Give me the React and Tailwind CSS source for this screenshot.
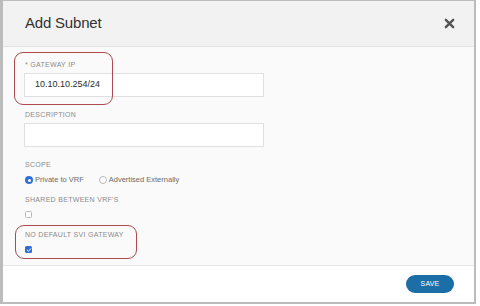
import React from 'react';

const Label = ({ children, className = '' }) => (
    <div className={`text-[7px] leading-[10px] tracking-[0.3px] uppercase text-[#8a8a8a] ${className}`}>{children}</div>
);

const Checkbox = ({ checked }) => (
    checked ? (
        <div className="w-[7px] h-[7px] rounded-[1.5px] bg-[#2f6fd6] flex items-center justify-center">
            <svg width="6" height="6" viewBox="0 0 10 10"><path d="M2 5.2 L4.2 7.3 L8 2.8" fill="none" stroke="#fff" strokeWidth="1.6" strokeLinecap="round" strokeLinejoin="round" /></svg>
        </div>
    ) : (
        <div className="w-[7px] h-[7px] rounded-[1.5px] border border-[#b9b9b9] bg-white" />
    )
);

const App = () => {
    return (
        <div className="w-[480px] h-[306px] bg-white" style={{ fontFamily: '"Liberation Sans", Arial, sans-serif' }}>
            <div className="w-[476px] h-[304px] flex flex-col border-l-[3px] border-t border-r-2 border-b-2 border-[#bcbcbc]">
                <header className="h-[46px] shrink-0 bg-[#f2f2f2] border-b border-[#e3e3e3] flex items-center justify-between pl-[22px] pr-[19px]">
                    <h2 className="text-[15px] tracking-[-0.2px] text-[#333]">Add Subnet</h2>
                    <svg width="11" height="11" viewBox="0 0 12 12"><path d="M2 2 L10 10 M10 2 L2 10" stroke="#555" strokeWidth="2.6" strokeLinecap="round" /></svg>
                </header>

                <main className="relative h-[218px] shrink-0 bg-[#fafafa] pl-[22px] pt-[13px]">
                    <Label>* Gateway IP</Label>
                    <div className="mt-[3px] -ml-[1px] w-[240px] h-[24px] bg-white border border-[#e0e0e0] flex items-center pl-[10px] text-[9px] text-[#2b2b2b]">
                        10.10.10.254/24
                    </div>

                    <Label className="mt-[13px]">Description</Label>
                    <div className="mt-[3px] -ml-[1px] w-[240px] h-[24px] bg-white border border-[#e0e0e0]" />

                    <Label className="mt-[13px]">Scope</Label>
                    <div className="mt-[5px] h-[10px] flex items-center text-[7.5px] text-[#6b6b6b]">
                        <div className="w-[8px] h-[8px] rounded-full bg-[#2f6fd6] flex items-center justify-center">
                            <div className="w-[3px] h-[3px] rounded-full bg-white" />
                        </div>
                        <span className="ml-[2px]">Private to VRF</span>
                        <div className="ml-[15px] w-[8px] h-[8px] rounded-full border border-[#b9b9b9] bg-white" />
                        <span className="ml-[2px]">Advertised Externally</span>
                    </div>

                    <Label className="mt-[10px]">Shared between VRF'S</Label>
                    <div className="mt-[6px]"><Checkbox /></div>

                    <Label className="mt-[12px]">No default SVI Gateway</Label>
                    <div className="mt-[6px]"><Checkbox checked /></div>

                    {/* highlight annotations */}
                    <div className="absolute left-[11px] top-[5px] w-[99px] h-[53px] rounded-[9px] border-[1.5px] border-[#ad4a50]" />
                    <div className="absolute left-[12px] top-[178px] w-[122px] h-[34px] rounded-[9px] border-[1.5px] border-[#ad4a50]" />
                </main>

                <footer className="flex-1 bg-white border-t border-[#e6e6e6] flex items-center justify-end pr-[20px]">
                    <button className="w-[48px] h-[18px] rounded-full bg-[#1b6fa6] text-white text-[7px] tracking-[0.2px]">SAVE</button>
                </footer>
            </div>
        </div>
    );
};

export default App;
